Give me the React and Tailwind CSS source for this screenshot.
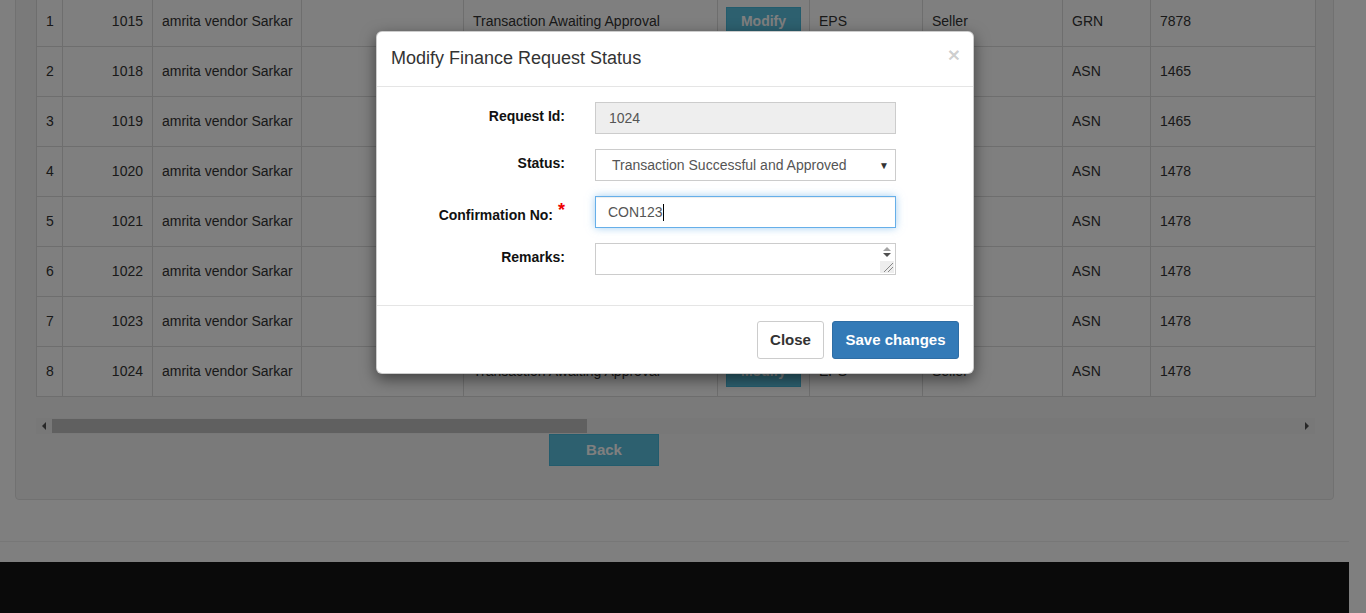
import React from 'react';

const rows = [
  { n: 1, id: 1015, doc: 'GRN', ref: '7878' },
  { n: 2, id: 1018, doc: 'ASN', ref: '1465' },
  { n: 3, id: 1019, doc: 'ASN', ref: '1465' },
  { n: 4, id: 1020, doc: 'ASN', ref: '1478' },
  { n: 5, id: 1021, doc: 'ASN', ref: '1478' },
  { n: 6, id: 1022, doc: 'ASN', ref: '1478' },
  { n: 7, id: 1023, doc: 'ASN', ref: '1478' },
  { n: 8, id: 1024, doc: 'ASN', ref: '1478' },
];

const cell = 'border border-[#ddd] px-[9px] align-middle';

const RequestTable = () => (
  <table className="table-fixed border-collapse bg-white w-[1279px] text-[14px] text-[#333]">
    <colgroup>
      <col className="w-[26px]" />
      <col className="w-[90px]" />
      <col className="w-[149px]" />
      <col className="w-[162px]" />
      <col className="w-[254px]" />
      <col className="w-[92px]" />
      <col className="w-[113px]" />
      <col className="w-[140px]" />
      <col className="w-[88px]" />
      <col className="w-[165px]" />
    </colgroup>
    <tbody>
      {rows.map((r) => (
        <tr key={r.n} className="h-[50px]">
          <td className={cell}>{r.n}</td>
          <td className={`${cell} text-right`}>{r.id}</td>
          <td className={`${cell} whitespace-nowrap`}>amrita vendor Sarkar</td>
          <td className={cell}></td>
          <td className={`${cell} whitespace-nowrap`}>Transaction Awaiting Approval</td>
          <td className={`${cell} pl-[8px]`}>
            <button className="h-[30px] w-[75px] bg-[#5bc0de] border border-[#46b8da] text-white font-bold text-[14px]">
              Modify
            </button>
          </td>
          <td className={cell}>EPS</td>
          <td className={cell}>Seller</td>
          <td className={cell}>{r.doc}</td>
          <td className={cell}>{r.ref}</td>
        </tr>
      ))}
    </tbody>
  </table>
);

const FakeScrollbar = () => (
  <div className="relative mt-[21px] h-[16px] w-[1279px] bg-[#f1f1f1] flex items-center">
    <div className="w-[16px] flex justify-center">
      <div className="w-0 h-0 border-y-[4px] border-y-transparent border-r-[4px] border-r-[#505050]" />
    </div>
    <div className="h-[14px] w-[535px] bg-[#c1c1c1]" />
    <div className="flex-1" />
    <div className="w-[16px] flex justify-center">
      <div className="w-0 h-0 border-y-[4px] border-y-transparent border-l-[4px] border-l-[#505050]" />
    </div>
  </div>
);

const FieldRow = ({ label, required, labelPad = 'pt-[4px]', children }) => (
  <div className="flex items-start">
    <div className={`w-[188px] text-right font-bold text-[14px] text-[#111] ${labelPad}`}>
      {label}
      {required && <span className="text-[#e00] text-[18px] leading-none ml-[5px] relative top-[-4px]">*</span>}
    </div>
    <div className="ml-[30px] w-[301px]">{children}</div>
  </div>
);

const Modal = () => (
  <div className="absolute left-[376px] top-[31px] w-[598px] bg-white rounded-[6px] border border-black/20 shadow-[0_5px_15px_rgba(0,0,0,0.5)] z-20">
    <div className="flex items-center justify-between h-[55px] pl-[14px] pr-[15px] border-b border-[#e5e5e5]">
      <h4 className="text-[18px] text-[#333] -mt-[2px]">Modify Finance Request Status</h4>
      <span className="text-[21px] font-bold text-black/20 leading-none -mr-[2px] -mt-[10px]">×</span>
    </div>
    <div className="pt-[15px] pb-[30px] flex flex-col gap-[15px]">
      <FieldRow label="Request Id:" labelPad="pt-[4px]">
        <div className="h-[32px] bg-[#eee] border border-[#ccc] px-[13px] flex items-center text-[14px] text-[#555]">
          1024
        </div>
      </FieldRow>
      <FieldRow label="Status:" labelPad="pt-[4px]">
        <div className="h-[32px] bg-white border border-[#ccc] pl-[16px] pr-[6px] flex items-center justify-between text-[14px] text-[#555]">
          <span>Transaction Successful and Approved</span>
          <span className="text-[10px] text-[#333]">▼</span>
        </div>
      </FieldRow>
      <FieldRow label="Confirmation No:" required labelPad="pt-[9px]">
        <div className="h-[32px] bg-white border border-[#66afe9] shadow-[inset_0_1px_1px_rgba(0,0,0,0.075),0_0_8px_rgba(102,175,233,0.6)] px-[12px] flex items-center text-[14px] text-[#555]">
          CON123
          <span className="inline-block w-px h-[17px] bg-black ml-px" />
        </div>
      </FieldRow>
      <FieldRow label="Remarks:" labelPad="pt-[4px]">
        <div className="h-[32px] bg-white border border-[#ccc] flex justify-end">
          <div className="w-[17px] flex flex-col items-center justify-between py-[1px]">
            <div className="flex flex-col items-center gap-[2px] pt-[2px]">
              <div className="w-0 h-0 border-x-[4px] border-x-transparent border-b-[4px] border-b-[#a3a3a3]" />
              <div className="w-0 h-0 border-x-[4px] border-x-transparent border-t-[4px] border-t-[#505050]" />
            </div>
            <svg width="14" height="12" viewBox="0 0 14 12" className="bg-[#eee]">
              <line x1="4" y1="11" x2="13" y2="2" stroke="#888" strokeWidth="1" />
              <line x1="8" y1="11" x2="13" y2="6" stroke="#888" strokeWidth="1" />
            </svg>
          </div>
        </div>
      </FieldRow>
    </div>
    <div className="border-t border-[#e5e5e5] h-[68px] pt-[15px] pr-[14px] flex justify-end items-start gap-[8px]">
      <button className="h-[38px] w-[67px] bg-white border border-[#ccc] rounded-[3px] font-bold text-[15px] text-[#333]">
        Close
      </button>
      <button className="h-[38px] w-[127px] bg-[#337ab7] border border-[#2e6da4] rounded-[3px] font-bold text-[15px] text-white">
        Save changes
      </button>
    </div>
  </div>
);

const App = () => {
  return (
    <div className="relative h-[613px] w-[1366px] overflow-hidden bg-white font-['Liberation_Sans',Arial,sans-serif]">
      <div className="w-[1349px]">
        <div className="ml-[15px] w-[1319px] mt-[-30px] bg-[#f5f5f5] border border-[#e3e3e3] rounded-b-[4px] pl-[20px] pt-[25px] pb-[33px]">
          <RequestTable />
          <FakeScrollbar />
          <div className="ml-[513px]">
            <button className="h-[32px] w-[110px] bg-[#5bc0de] border border-[#46b8da] text-white font-bold text-[15px]">
              Back
            </button>
          </div>
        </div>
        <div className="mt-[41px] border-t border-[#eee]" />
        <div className="mt-[20px] h-[51px] bg-[#151515]" />
      </div>

      {/* backdrop */}
      <div className="absolute inset-0 bg-black/50 z-10" />
      <Modal />
    </div>
  );
};

export default App;
